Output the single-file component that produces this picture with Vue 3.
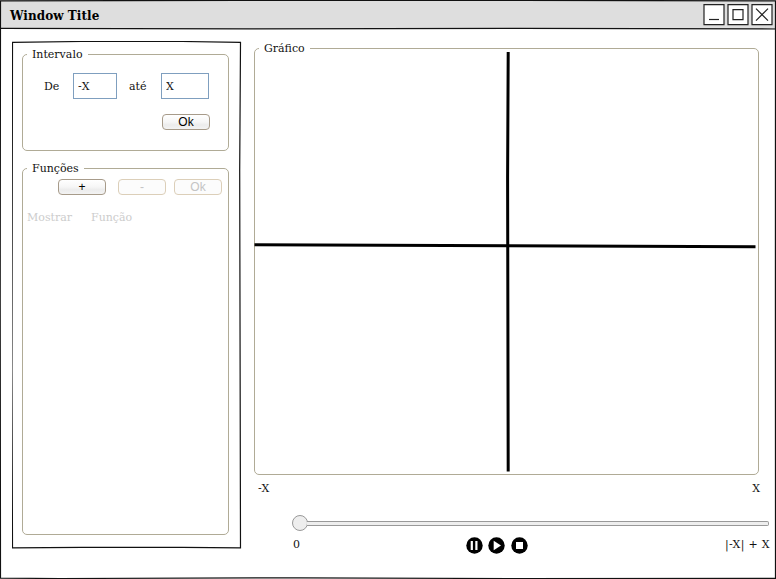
<script setup>
import { ref } from 'vue'

const from = ref('-X')
const to = ref('X')
</script>

<template>
  <div class="window">
    <header class="titlebar">
      <h1>Window Title</h1>
      <div class="controls">
        <svg width="22" height="22" viewBox="0 0 22 22"><path class="box" d="M1 .7H21V20.7H1Z" /><path d="M6 15.5H16" /></svg>
        <svg width="22" height="22" viewBox="0 0 22 22"><path class="box" d="M1 .7H21V20.7H1Z" /><path d="M6 5.6H16V15.6H6Z" /></svg>
        <svg width="22" height="22" viewBox="0 0 22 22"><path class="box" d="M1 .7H21V20.7H1Z" /><path d="M5 4.7L17 16.7M17 4.7L5 16.7" /></svg>
      </div>
    </header>

    <main>
      <aside class="panel">
        <svg class="sketch" width="230" height="509" viewBox="0 0 230 509">
          <path d="M.5 1.3L70 .5H170L228.5 1.3L227.7 130L228.5 506.8L170 506.3H70L.5 506.8L-.1 330L.5 1.3Z" />
        </svg>
        <fieldset class="interval">
          <legend>Intervalo</legend>
          <div class="range">
            <label class="lab-from" for="from">De</label>
            <input id="from" v-model="from" class="in-from" />
            <label class="lab-to" for="to">até</label>
            <input id="to" v-model="to" class="in-to" />
          </div>
          <button class="apply">Ok</button>
        </fieldset>
        <fieldset class="functions">
          <legend>Funções</legend>
          <div class="actions">
            <button>+</button>
            <button disabled>-</button>
            <button disabled>Ok</button>
          </div>
          <div class="columns"><span>Mostrar</span><span>Função</span></div>
        </fieldset>
      </aside>

      <section class="content">
        <fieldset class="graph">
          <legend>Gráfico</legend>
          <svg class="axes" width="503" height="430" viewBox="0 0 503 430">
            <path d="M253.2 4L252.6 130L253.2 423.5" />
            <path d="M-.5 196.8L500.5 198.8" />
          </svg>
        </fieldset>
        <div class="bounds"><span class="wide">-X</span><span>X</span></div>
        <div class="slider"><i class="thumb"></i><i class="track"></i></div>
        <div class="player">
          <span>0</span>
          <div class="media">
            <svg width="17" height="17" viewBox="0 0 17 17"><circle cx="8.5" cy="8.5" r="8.2" /><path d="M4.7 4H6.9V13H4.7ZM9.3 4H11.5V13H9.3Z" /></svg>
            <svg width="17" height="17" viewBox="0 0 17 17"><circle cx="8.5" cy="8.5" r="8.2" /><path d="M5.7 3.8L13 8.5L5.7 13.2Z" /></svg>
            <svg width="17" height="17" viewBox="0 0 17 17"><circle cx="8.5" cy="8.5" r="8.2" /><path d="M5 5H12V12H5Z" /></svg>
          </div>
          <span class="wide">|-X| + X</span>
        </div>
      </section>
    </main>

    <svg class="frame" width="776" height="579" viewBox="0 0 776 579">
      <path d="M.5 .8L240 .4H520L775.5 .8L775.4 300L775.5 578.4L520 578.6L300 577.8L60 578.5L.5 578.2L.2 300Z" />
      <path d="M0 28.4L250 28.9L520 28.3L776 29" />
    </svg>
  </div>
</template>

<style>
body {
  margin: 0;
  background: #fff;
}
</style>

<style scoped>
.window {
  position: relative;
  box-sizing: border-box;
  width: 776px;
  height: 579px;
  overflow: hidden;
  background: #fff;
  color: #111;
  font: 11px/13px "DejaVu Serif", serif;
}
.frame,
.sketch {
  position: absolute;
  top: 0;
  left: 0;
  pointer-events: none;
  fill: none;
  stroke: #111;
  stroke-width: 1.2;
}
.titlebar {
  display: flex;
  box-sizing: border-box;
  height: 29px;
  padding: 4px 3px 0 10px;
  justify-content: space-between;
  background: #dedede;
}
h1 {
  margin: 5px 0 0;
  color: #000;
  font: bold 12px/15px "DejaVu Serif", serif;
  letter-spacing: 0.06px;
}
.controls {
  display: flex;
  gap: 2px;
}
.controls svg {
  fill: none;
  stroke: #222;
  stroke-width: 1.2;
}
.controls .box {
  fill: #fff;
}
main {
  display: flex;
  padding: 12px 0 0 12px;
}
.panel {
  position: relative;
  box-sizing: border-box;
  width: 230px;
  height: 509px;
  padding: 7px 0 0 10px;
}
fieldset {
  box-sizing: border-box;
  min-width: 0;
  margin: 0;
  padding: 0 0 0 4px;
  border: 1px solid #b0ab96;
  border-radius: 5px;
}
legend {
  padding: 0 5px;
}
.interval {
  width: 207px;
  height: 103px;
}
.range {
  display: flex;
  align-items: center;
  padding: 12px 0 0 17px;
}
.lab-from {
  width: 29px;
}
.lab-to {
  width: 32px;
  margin-left: 12px;
}
input {
  box-sizing: border-box;
  width: 44px;
  height: 26px;
  padding: 0 4px;
  border: 1px solid #7f9fbf;
  border-radius: 0;
  background: #fff;
  color: #111;
  font: inherit;
  letter-spacing: 0.4px;
}
.in-to {
  width: 48px;
}
button {
  display: block;
  box-sizing: border-box;
  width: 48px;
  height: 16px;
  padding: 0;
  border: 1px solid #a79b8a;
  border-radius: 4px;
  background: linear-gradient(#fff, #f6f6f6 50%, #ececec 70%, #f3f3f3);
  color: #000;
  font: 12px/14px "Liberation Sans", sans-serif;
  letter-spacing: 0.2px;
}
button:disabled {
  border-color: #dccfb9;
  background: #fcfcfc;
  color: #c4c4c4;
}
.apply {
  margin: 15px 0 0 135px;
}
.functions {
  width: 207px;
  height: 373px;
  margin-top: 11px;
}
.actions {
  display: flex;
  padding: 4px 0 0 31px;
}
.actions button + button {
  margin-left: 12px;
}
.actions button:last-child {
  margin-left: 8px;
}
.columns {
  display: flex;
  gap: 19px;
  margin-top: 16px;
  color: #ccc;
}
.content {
  width: 522px;
  margin-left: 12px;
  padding-top: 1px;
}
.graph {
  width: 505px;
  height: 433px;
  padding-left: 0;
}
.graph legend {
  margin-left: 4px;
}
.axes {
  display: block;
  margin-top: -7px;
  overflow: visible;
  fill: none;
  stroke: #000;
  stroke-width: 3;
}
.wide {
  letter-spacing: 0.3px;
}
.bounds {
  display: flex;
  justify-content: space-between;
  padding: 7px 16px 0 4px;
}
.slider {
  display: flex;
  align-items: center;
  margin: 20px 7px 0 38px;
}
.thumb {
  box-sizing: border-box;
  width: 16px;
  height: 16px;
  border: 1px solid #999;
  border-radius: 50%;
  background: #eee;
}
.track {
  box-sizing: border-box;
  flex: 1;
  height: 5px;
  margin-left: -1px;
  border: 1px solid #999;
  border-left: 0;
  border-radius: 0 2px 2px 0;
  background: #eee;
}
.player {
  display: grid;
  grid-template-columns: 173px 1fr auto;
  margin: 6px 6px 0 39px;
}
.player > span {
  margin-top: 1px;
}
.media {
  display: flex;
  gap: 5.3px;
}
.media svg {
  overflow: visible;
  fill: #000;
}
.media path {
  fill: #fff;
}
</style>
